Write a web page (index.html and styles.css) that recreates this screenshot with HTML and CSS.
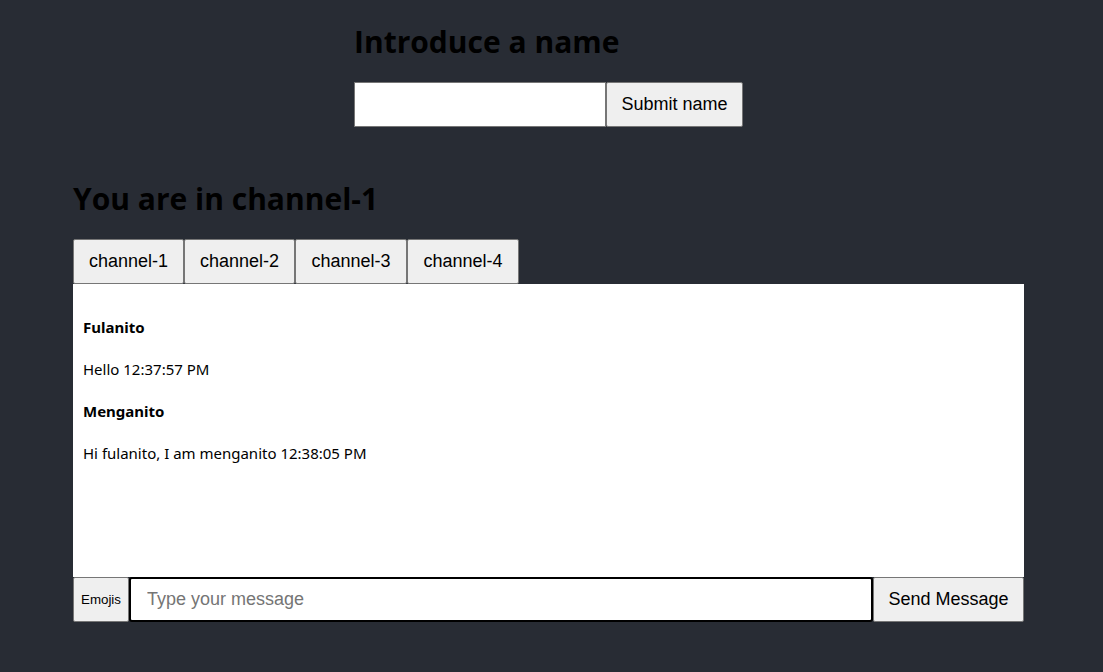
FILE: index.html
```html
<!DOCTYPE html>
<html lang="en">
<head>
<meta charset="utf-8">
<title>Chat</title>
<link rel="stylesheet" href="styles.css">
</head>
<body>
<div class="app">
  <section class="name-form">
    <h1 class="title">Introduce a name</h1>
    <div class="name-row">
      <input class="name-input" type="text">
      <button class="btn btn-submit">Submit name</button>
    </div>
  </section>
  <section class="chat">
    <h1 class="title">You are in channel-1</h1>
    <div class="tabs">
      <button class="btn tab">channel-1</button>
      <button class="btn tab">channel-2</button>
      <button class="btn tab">channel-3</button>
      <button class="btn tab">channel-4</button>
    </div>
    <div class="messages">
      <p class="author">Fulanito</p>
      <p class="text">Hello 12:37:57 PM</p>
      <p class="author">Menganito</p>
      <p class="text">Hi fulanito, I am menganito 12:38:05 PM</p>
    </div>
    <div class="composer">
      <button class="btn btn-emojis">Emojis</button>
      <input class="msg-input" type="text" placeholder="Type your message">
      <button class="btn btn-send">Send Message</button>
    </div>
  </section>
</div>
</body>
</html>
```
FILE: styles.css
```css
html, body {
  margin: 0;
  padding: 0;
  background: #282c34;
  height: 100%;
}
.app {
  display: flex;
  flex-direction: column;
  align-items: center;
  padding-right: 6px;
  font-family: "Open Sans", "Noto Sans", sans-serif;
  color: #000;
}
.title {
  margin: 0 0 20px 0;
  font-size: 30px;
  line-height: 40px;
  font-weight: 700;
  color: #000;
}
.name-form {
  width: 389px;
  padding-top: 22px;
}
.name-row {
  display: flex;
  height: 45px;
}
.name-input {
  width: 252px;
  box-sizing: border-box;
  border: 1px solid #767676;
  background: #fff;
  margin: 0;
  padding: 0 8px;
}
.btn {
  font-family: "Liberation Sans", Arial, sans-serif;
  font-size: 18px;
  color: #000;
  background: #efefef;
  border: 1px solid #767676;
  border-radius: 2px;
  margin: 0;
  padding: 0;
  box-sizing: border-box;
  cursor: pointer;
}
.btn-submit {
  width: 137px;
}
.chat {
  width: 951px;
  margin-top: 52px;
}
.tabs {
  display: flex;
  height: 45px;
}
.tab {
  width: 111px;
}
.tab:nth-child(3), .tab:nth-child(4) {
  width: 112px;
}
.messages {
  background: #fff;
  height: 293px;
  box-sizing: border-box;
  padding: 20px 10px 10px;
  font-family: "Noto Sans", "Open Sans", sans-serif;
  font-size: 15px;
}
.messages p {
  margin: 0;
  line-height: 20px;
  padding: 13px 0 9px;
}
.messages .author {
  font-weight: 700;
}
.composer {
  display: flex;
  height: 45px;
}
.btn-emojis {
  width: 56px;
  font-size: 13.33px;
}
.msg-input {
  flex: 1;
  box-sizing: border-box;
  border: 2px solid #000;
  border-radius: 3px;
  margin: 0;
  padding: 0 16px;
  font-family: "Liberation Sans", Arial, sans-serif;
  font-size: 18px;
  outline: none;
}
.msg-input::placeholder {
  color: #757575;
}
.btn-send {
  width: 151px;
}
```
